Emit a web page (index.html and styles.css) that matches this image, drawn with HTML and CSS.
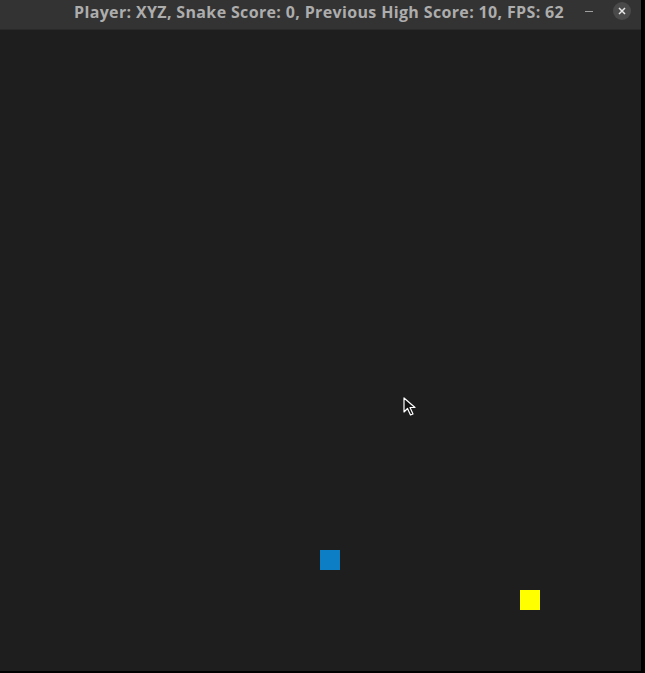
FILE: index.html
```html
<!DOCTYPE html>
<html>
<head>
<meta charset="utf-8">
<link rel="stylesheet" href="styles.css">
</head>
<body>
<div class="window">
  <div class="titlebar">
    <div class="title">Player: XYZ, Snake Score: 0, Previous High Score: 10, FPS: 62</div>
    <div class="controls">
      <span class="min"></span>
      <span class="close">
        <svg width="8" height="8" viewBox="0 0 8 8"><path d="M1 1L7 7M7 1L1 7" stroke="#e8e8e8" stroke-width="1.5"/></svg>
      </span>
    </div>
  </div>
  <div class="canvas">
    <div class="snake"></div>
    <div class="food"></div>
    <svg class="cursor" width="14" height="21" viewBox="0 0 14 21">
      <path d="M1 1L1 15L4.5 11.5L7.5 18L10 17L7 10.5L12 10.5Z" fill="#111" stroke="#fff" stroke-width="1.2" stroke-linejoin="round"/>
    </svg>
  </div>
</div>
</body>
</html>
```
FILE: styles.css
```css
html, body {
  margin: 0;
  padding: 0;
  background: #000;
  width: 645px;
  height: 673px;
  overflow: hidden;
}
.window {
  width: 641px;
  height: 671px;
  display: flex;
  flex-direction: column;
}
.titlebar {
  height: 30px;
  background: #333333;
  border-bottom: 1px solid #2a2a2a;
  box-sizing: border-box;
  display: flex;
  align-items: center;
  position: relative;
}
.title {
  flex: 1;
  padding-left: 74px;
  font-family: "Open Sans", sans-serif;
  font-weight: 700;
  font-size: 16px;
  color: #adadad;
  white-space: nowrap;
  letter-spacing: 0.35px;
  margin-top: -6px;
}
.controls {
  display: flex;
  align-items: center;
  gap: 20px;
  padding-right: 10px;
  margin-top: -7px;
}
.min {
  width: 8px;
  height: 1px;
  background: #a0a0a0;
}
.close {
  width: 18px;
  height: 18px;
  border-radius: 50%;
  background: #4a4a4a;
  display: flex;
  align-items: center;
  justify-content: center;
}
.canvas {
  flex: 1;
  background: #1e1e1e;
  position: relative;
}
.snake {
  position: absolute;
  left: 320px;
  top: 520px;
  width: 20px;
  height: 20px;
  background: #0b7ec6;
}
.food {
  position: absolute;
  left: 520px;
  top: 560px;
  width: 20px;
  height: 20px;
  background: #ffff00;
}
.cursor {
  position: absolute;
  left: 403px;
  top: 367px;
}
```
